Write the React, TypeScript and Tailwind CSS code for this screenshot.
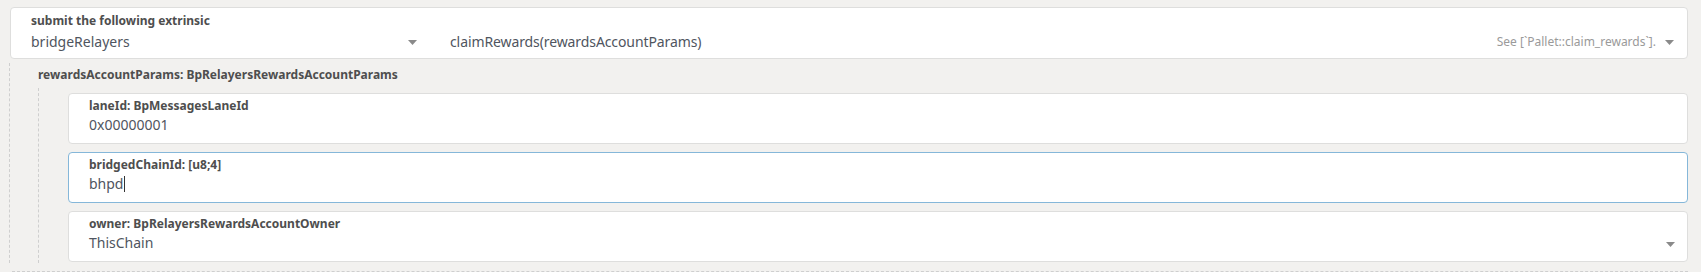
import React from 'react';

const font = { fontFamily: '"Noto Sans", "Open Sans", sans-serif' };

function Caret({ className = '' }: { className?: string }) {
  return (
    <svg width="9" height="5" viewBox="0 0 9 5" className={className}>
      <path d="M0 0 H9 L4.5 5 Z" fill="#8a8a8a" />
    </svg>
  );
}

interface ParamCardProps {
  label: string;
  value: string;
  focused?: boolean;
  dropdown?: boolean;
}

function ParamCard({ label, value, focused, dropdown }: ParamCardProps) {
  return (
    <div
      className={`relative h-[51px] bg-white rounded-[4px] border pl-[20px] pt-[4px] ${
        focused ? 'border-[#85b7d9]' : 'border-[#dededd]'
      }`}
    >
      <div className="text-[12px] leading-[16px] font-bold text-[#4e4e4e]">{label}</div>
      <div className="mt-[1px] text-[14px] leading-[20px] text-[#4f5560] flex items-center">
        <span>{value}</span>
        {focused && <span className="inline-block w-[1px] h-[16px] bg-[#333] ml-[1px]" />}
      </div>
      {dropdown && <Caret className="absolute right-[12px] top-[30px]" />}
    </div>
  );
}

export default function App() {
  return (
    <div className="w-[1701px] h-[272px] bg-[#f2f1ef] overflow-hidden pl-[10px] pr-[13px] pt-[7px]" style={font}>
      {/* extrinsic selector */}
      <div className="h-[52px] bg-white border border-[#dededd] rounded-[4px] pl-[20px] pt-[5px]">
        <div className="text-[12px] leading-[16px] font-bold text-[#4e4e4e]">submit the following extrinsic</div>
        <div className="mt-[3px] flex items-center text-[14px] leading-[20px] text-[#4f5560]">
          <div className="w-[386px] flex items-center justify-between">
            <span>bridgeRelayers</span>
            <Caret />
          </div>
          <div className="flex-1 flex items-center justify-between pl-[33px] pr-[13px]">
            <span className="tracking-[-0.1px]">claimRewards(rewardsAccountParams)</span>
            <div className="flex items-center gap-[9px]">
              <span className="text-[12px] text-[#9a9a9a]">See [`Pallet::claim_rewards`].</span>
              <Caret />
            </div>
          </div>
        </div>
      </div>

      {/* params */}
      <div className="mt-[4px] -ml-[1px] border-l border-dashed border-[#cfcfcf] h-[200px] pl-[28px] pt-[4px]">
        <div className="text-[12px] leading-[16px] font-bold text-[#4e4e4e]">
          rewardsAccountParams: BpRelayersRewardsAccountParams
        </div>
        <div className="mt-[5px] border-l border-dashed border-[#cfcfcf] pl-[29px] pt-[5px] flex flex-col gap-[8px] h-[175px]">
          <ParamCard label="laneId: BpMessagesLaneId" value="0x00000001" />
          <ParamCard label="bridgedChainId: [u8;4]" value="bhpd" focused />
          <ParamCard label="owner: BpRelayersRewardsAccountOwner" value="ThisChain" dropdown />
        </div>
      </div>
      <div className="mt-[8px] ml-[2px] border-t border-dashed border-[#cfcfcf]" />
    </div>
  );
}
